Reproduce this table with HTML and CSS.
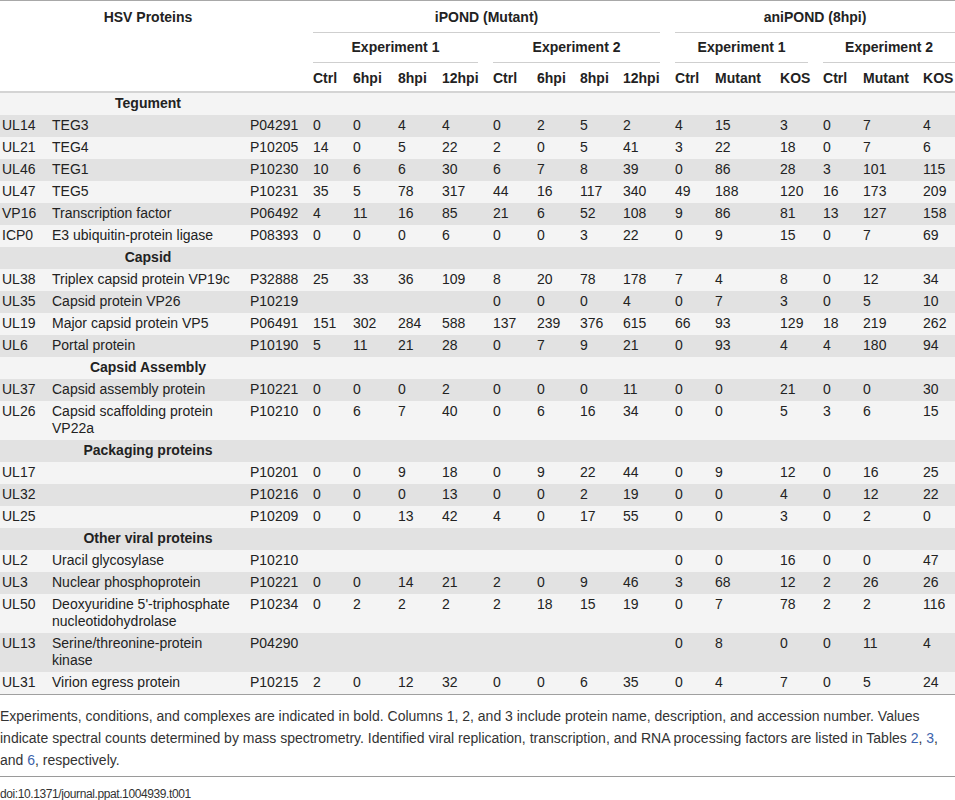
FILE: index.html
```html
<!DOCTYPE html>
<html lang="en">
<head>
    <meta charset="UTF-8">
    <meta name="viewport" content="width=device-width, initial-scale=1.0">
    <title>HSV Proteins identified by iPOND and aniPOND</title>
    <link rel="stylesheet" href="styles.css">
</head>
<body>
    <table class="data-table">
        <colgroup>
            <col style="width:50px"><col style="width:198px"><col style="width:63px">
            <col style="width:40px"><col style="width:45px"><col style="width:44px"><col style="width:51px">
            <col style="width:44px"><col style="width:43px"><col style="width:43px"><col style="width:52px">
            <col style="width:40px"><col style="width:65px"><col style="width:43px">
            <col style="width:40px"><col style="width:60px"><col style="width:34px">
        </colgroup>
        <thead>
            <tr class="head-top">
                <td rowspan="3"></td>
                <th rowspan="3" class="hsv">HSV Proteins</th>
                <td rowspan="3"></td>
                <th colspan="8" class="group"><div>iPOND (Mutant)</div></th>
                <th colspan="6" class="group last"><div>aniPOND (8hpi)</div></th>
            </tr>
            <tr class="head-mid">
                <th colspan="4" class="group"><div>Experiment 1</div></th>
                <th colspan="4" class="group"><div>Experiment 2</div></th>
                <th colspan="3" class="group"><div>Experiment 1</div></th>
                <th colspan="3" class="group last"><div>Experiment 2</div></th>
            </tr>
            <tr class="head-cols">
                <th>Ctrl</th><th>6hpi</th><th>8hpi</th><th>12hpi</th>
                <th>Ctrl</th><th>6hpi</th><th>8hpi</th><th>12hpi</th>
                <th>Ctrl</th><th>Mutant</th><th>KOS</th>
                <th>Ctrl</th><th>Mutant</th><th>KOS</th>
            </tr>
        </thead>
        <tbody>
            <!-- Tegument -->
            <tr class="section"><td></td><th>Tegument</th><td colspan="15"></td></tr>
            <tr><td>UL14</td><td>TEG3</td><td>P04291</td><td>0</td><td>0</td><td>4</td><td>4</td><td>0</td><td>2</td><td>5</td><td>2</td><td>4</td><td>15</td><td>3</td><td>0</td><td>7</td><td>4</td></tr>
            <tr><td>UL21</td><td>TEG4</td><td>P10205</td><td>14</td><td>0</td><td>5</td><td>22</td><td>2</td><td>0</td><td>5</td><td>41</td><td>3</td><td>22</td><td>18</td><td>0</td><td>7</td><td>6</td></tr>
            <tr><td>UL46</td><td>TEG1</td><td>P10230</td><td>10</td><td>6</td><td>6</td><td>30</td><td>6</td><td>7</td><td>8</td><td>39</td><td>0</td><td>86</td><td>28</td><td>3</td><td>101</td><td>115</td></tr>
            <tr><td>UL47</td><td>TEG5</td><td>P10231</td><td>35</td><td>5</td><td>78</td><td>317</td><td>44</td><td>16</td><td>117</td><td>340</td><td>49</td><td>188</td><td>120</td><td>16</td><td>173</td><td>209</td></tr>
            <tr><td>VP16</td><td>Transcription factor</td><td>P06492</td><td>4</td><td>11</td><td>16</td><td>85</td><td>21</td><td>6</td><td>52</td><td>108</td><td>9</td><td>86</td><td>81</td><td>13</td><td>127</td><td>158</td></tr>
            <tr><td>ICP0</td><td>E3 ubiquitin-protein ligase</td><td>P08393</td><td>0</td><td>0</td><td>0</td><td>6</td><td>0</td><td>0</td><td>3</td><td>22</td><td>0</td><td>9</td><td>15</td><td>0</td><td>7</td><td>69</td></tr>

            <!-- Capsid -->
            <tr class="section"><td></td><th>Capsid</th><td colspan="15"></td></tr>
            <tr><td>UL38</td><td>Triplex capsid protein VP19c</td><td>P32888</td><td>25</td><td>33</td><td>36</td><td>109</td><td>8</td><td>20</td><td>78</td><td>178</td><td>7</td><td>4</td><td>8</td><td>0</td><td>12</td><td>34</td></tr>
            <tr><td>UL35</td><td>Capsid protein VP26</td><td>P10219</td><td></td><td></td><td></td><td></td><td>0</td><td>0</td><td>0</td><td>4</td><td>0</td><td>7</td><td>3</td><td>0</td><td>5</td><td>10</td></tr>
            <tr><td>UL19</td><td>Major capsid protein VP5</td><td>P06491</td><td>151</td><td>302</td><td>284</td><td>588</td><td>137</td><td>239</td><td>376</td><td>615</td><td>66</td><td>93</td><td>129</td><td>18</td><td>219</td><td>262</td></tr>
            <tr><td>UL6</td><td>Portal protein</td><td>P10190</td><td>5</td><td>11</td><td>21</td><td>28</td><td>0</td><td>7</td><td>9</td><td>21</td><td>0</td><td>93</td><td>4</td><td>4</td><td>180</td><td>94</td></tr>

            <!-- Capsid Assembly -->
            <tr class="section"><td></td><th>Capsid Assembly</th><td colspan="15"></td></tr>
            <tr><td>UL37</td><td>Capsid assembly protein</td><td>P10221</td><td>0</td><td>0</td><td>0</td><td>2</td><td>0</td><td>0</td><td>0</td><td>11</td><td>0</td><td>0</td><td>21</td><td>0</td><td>0</td><td>30</td></tr>
            <tr><td>UL26</td><td>Capsid scaffolding protein VP22a</td><td>P10210</td><td>0</td><td>6</td><td>7</td><td>40</td><td>0</td><td>6</td><td>16</td><td>34</td><td>0</td><td>0</td><td>5</td><td>3</td><td>6</td><td>15</td></tr>

            <!-- Packaging proteins -->
            <tr class="section"><td></td><th>Packaging proteins</th><td colspan="15"></td></tr>
            <tr><td>UL17</td><td></td><td>P10201</td><td>0</td><td>0</td><td>9</td><td>18</td><td>0</td><td>9</td><td>22</td><td>44</td><td>0</td><td>9</td><td>12</td><td>0</td><td>16</td><td>25</td></tr>
            <tr><td>UL32</td><td></td><td>P10216</td><td>0</td><td>0</td><td>0</td><td>13</td><td>0</td><td>0</td><td>2</td><td>19</td><td>0</td><td>0</td><td>4</td><td>0</td><td>12</td><td>22</td></tr>
            <tr><td>UL25</td><td></td><td>P10209</td><td>0</td><td>0</td><td>13</td><td>42</td><td>4</td><td>0</td><td>17</td><td>55</td><td>0</td><td>0</td><td>3</td><td>0</td><td>2</td><td>0</td></tr>

            <!-- Other viral proteins -->
            <tr class="section"><td></td><th>Other viral proteins</th><td colspan="15"></td></tr>
            <tr><td>UL2</td><td>Uracil glycosylase</td><td>P10210</td><td></td><td></td><td></td><td></td><td></td><td></td><td></td><td></td><td>0</td><td>0</td><td>16</td><td>0</td><td>0</td><td>47</td></tr>
            <tr><td>UL3</td><td>Nuclear phosphoprotein</td><td>P10221</td><td>0</td><td>0</td><td>14</td><td>21</td><td>2</td><td>0</td><td>9</td><td>46</td><td>3</td><td>68</td><td>12</td><td>2</td><td>26</td><td>26</td></tr>
            <tr><td>UL50</td><td>Deoxyuridine 5'-triphosphate nucleotidohydrolase</td><td>P10234</td><td>0</td><td>2</td><td>2</td><td>2</td><td>2</td><td>18</td><td>15</td><td>19</td><td>0</td><td>7</td><td>78</td><td>2</td><td>2</td><td>116</td></tr>
            <tr><td>UL13</td><td>Serine/threonine-protein kinase</td><td>P04290</td><td></td><td></td><td></td><td></td><td></td><td></td><td></td><td></td><td>0</td><td>8</td><td>0</td><td>0</td><td>11</td><td>4</td></tr>
            <tr><td>UL31</td><td>Virion egress protein</td><td>P10215</td><td>2</td><td>0</td><td>12</td><td>32</td><td>0</td><td>0</td><td>6</td><td>35</td><td>0</td><td>4</td><td>7</td><td>0</td><td>5</td><td>24</td></tr>
        </tbody>
    </table>

    <p class="caption">Experiments, conditions, and complexes are indicated in bold. Columns 1, 2, and 3 include protein name, description, and accession number. Values indicate spectral counts determined by mass spectrometry. Identified viral replication, transcription, and RNA processing factors are listed in Tables <a href="#">2</a>, <a href="#">3</a>, and <a href="#">6</a>, respectively.</p>

    <p class="doi">doi:10.1371/journal.ppat.1004939.t001</p>
</body>
</html>
```

FILE: styles.css
```css
body { margin: 0; font-family: "Liberation Sans", Arial, Helvetica, sans-serif; font-size: 14px; color: #222; background: #fff; }

.data-table { width: 955px; table-layout: fixed; border-collapse: collapse; border-top: 1px solid #a8a8a8; border-bottom: 1px solid #a0a0a0; line-height: 17px; }
.data-table th, .data-table td { padding: 2px 4px 3px 2px; text-align: left; vertical-align: top; white-space: normal; overflow: visible; }
.data-table th { font-weight: bold; }

thead tr.head-top th, thead tr.head-top td { padding-top: 8px; padding-bottom: 0; }
thead tr.head-mid th { padding-top: 6px; padding-bottom: 0; }
thead tr.head-cols th { padding-top: 7px; padding-bottom: 4px; }
thead { border-bottom: 2px solid #d4d4d4; }
.hsv { text-align: center !important; }
.group { text-align: center !important; padding-right: 13px !important; }
.group.last { padding-right: 0 !important; }
.group div { padding-bottom: 6px; border-bottom: 1px solid #cfcfcf; }

tbody tr:nth-child(odd) { background-color: #f4f4f4; }
tbody tr:nth-child(even) { background-color: #e2e2e2; }
tr.section th { text-align: center; }

.caption { margin: 0; padding: 10px 0 5px; line-height: 22px; color: #333; width: 955px; border-bottom: 1px solid #9a9a9a; }
.caption a { color: #3c63ac; text-decoration: none; }
.doi { margin: 0; padding-top: 9px; font-size: 12px; letter-spacing: -0.4px; color: #333; line-height: 17px; }
```
